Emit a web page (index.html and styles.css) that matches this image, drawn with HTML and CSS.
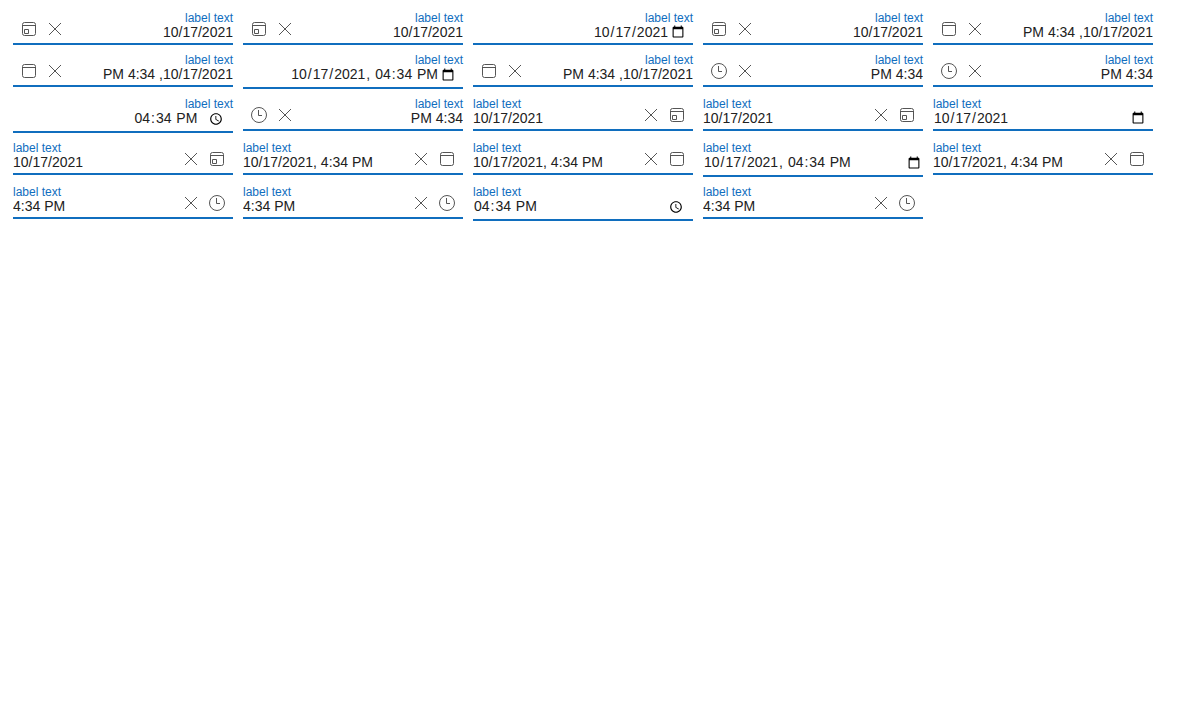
FILE: index.html
```
<!DOCTYPE html>
<html lang="en-US">
<head>
<meta charset="utf-8">
<title>Date and time fields</title>
<link rel="stylesheet" href="styles.css">
<script src="fields.js" defer></script>
</head>
<body>
<svg class="sprite" aria-hidden="true">
  <symbol id="icon-date" viewBox="0 0 16 16"><rect x="1.5" y="1.5" width="13" height="13" rx="2"/><path d="M1.5 4.5h13M3.5 8.5h4v4h-4z"/></symbol>
  <symbol id="icon-datetime" viewBox="0 0 16 16"><rect x="1.5" y="1.5" width="13" height="13" rx="2"/><path d="M1.5 4.5h13"/></symbol>
  <symbol id="icon-time" viewBox="0 0 16 16"><circle cx="8" cy="8" r="7.5"/><path d="M7.5 3v5.5H11"/></symbol>
  <symbol id="icon-clear" viewBox="0 0 16 16"><path d="M2 2l12 12M14 2L2 14"/></symbol>
</svg>
<main class="fields" id="fields"></main>
</body>
</html>
```
FILE: styles.css
```
body {
  margin: 0;
  background: #fff;
  font-family: "Liberation Sans", Arial, sans-serif;
}

.sprite {
  display: none;
}

.fields {
  display: flex;
  flex-wrap: wrap;
  align-items: flex-start;
  gap: 10px;
  padding: 13px;
}

.field {
  display: grid;
  grid-template-columns: 1fr auto;
  box-sizing: border-box;
  width: 220px;
  border-bottom: 2px solid #106ebe;
}

.label {
  color: #106ebe;
  font-size: 12px;
  line-height: 10px;
}

.value {
  grid-column: 1;
  box-sizing: border-box;
  width: 100%;
  min-width: 0;
  height: 20px;
  margin: 0;
  padding: 0 0 2px;
  border: 0;
  outline: 0;
  background: transparent;
  color: #212121;
  font: 14px "Liberation Sans", Arial, sans-serif;
}

.native .value {
  grid-column: 1 / -1;
}

.tall .value {
  height: 22px;
  padding-bottom: 4px;
}

.inset .value {
  padding-right: 6px;
}

.field[dir="rtl"] .value::-webkit-datetime-edit {
  text-align: right;
}

.field[dir="rtl"] .value::-webkit-calendar-picker-indicator {
  margin-inline: 0;
}

.field[dir="rtl"] .value[type="time"]::-webkit-calendar-picker-indicator {
  margin-left: 8px;
}

.tall .value::-webkit-calendar-picker-indicator {
  margin-top: 2px;
}

.actions {
  grid-column: 2;
  grid-row: 1 / span 2;
  display: flex;
  align-items: center;
  padding-top: 2px;
  padding-inline-end: 3px;
}

.action {
  display: flex;
  justify-content: center;
  width: 26px;
  margin: 0;
  padding: 0;
  border: 0;
  background: transparent;
  cursor: pointer;
}

.icon {
  width: 16px;
  height: 16px;
  fill: none;
  stroke: #555;
  stroke-width: 1;
}
```
FILE: fields.js
```
const values = {
  date: { text: "10/17/2021", native: "2021-10-17", type: "date" },
  datetime: { text: "10/17/2021, 4:34 PM", native: "2021-10-17T16:34", type: "datetime-local" },
  time: { text: "4:34 PM", native: "16:34", type: "time" }
};

// Each entry: kind, direction, and optional modifiers for native pickers.
const fields = [
  ["date", "rtl"], ["date", "rtl"], ["date", "rtl", "native inset"], ["date", "rtl"], ["datetime", "rtl"],
  ["datetime", "rtl"], ["datetime", "rtl", "native tall inset"], ["datetime", "rtl"], ["time", "rtl"], ["time", "rtl"],
  ["time", "rtl", "native tall inset"], ["time", "rtl"], ["date", "ltr"], ["date", "ltr"], ["date", "ltr", "native inset"],
  ["date", "ltr"], ["datetime", "ltr"], ["datetime", "ltr"], ["datetime", "ltr", "native tall"], ["datetime", "ltr"],
  ["time", "ltr"], ["time", "ltr"], ["time", "ltr", "native tall inset"], ["time", "ltr"]
];

const button = (icon, title) =>
  `<button class="action" type="button" aria-label="${title}"><svg class="icon"><use href="#icon-${icon}"/></svg></button>`;

document.getElementById("fields").innerHTML = fields.map(([kind, dir, modifiers = ""], i) => {
  const v = values[kind];
  const native = modifiers.includes("native");
  return `<div class="field ${modifiers}" dir="${dir}">
    <label class="label" for="field-${i}">label text</label>
    <input class="value" id="field-${i}" type="${native ? v.type : "text"}" value="${native ? v.native : v.text}">
    ${native ? "" : `<div class="actions">${button("clear", "Clear")}${button(kind, "Open picker")}</div>`}
  </div>`;
}).join("");
```
